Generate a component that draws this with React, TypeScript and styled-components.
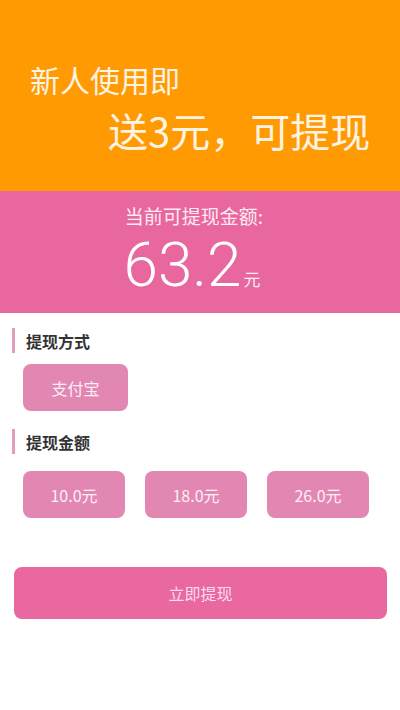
import styled, { createGlobalStyle } from "styled-components";

const GlobalStyle = createGlobalStyle`
  html, body {
    margin: 0;
    padding: 0;
    background: #fff;
  }
  body {
    font-family: "Noto Sans CJK SC", "Noto Sans", sans-serif;
  }
  * {
    box-sizing: border-box;
  }
`;

const Page = styled.div`
  width: 400px;
  min-height: 710px;
  background: #fff;
  display: flex;
  flex-direction: column;
`;

const Banner = styled.div`
  height: 191px;
  background: #ff9a02;
  color: #fdf3e3;
  padding: 61px 0 0 30px;
  display: flex;
  flex-direction: column;
`;

const BannerLine = styled.div<{ $size: number; $indent?: number; $gap?: number }>`
  font-size: ${(p) => p.$size}px;
  line-height: ${(p) => Math.round(p.$size * 1.2)}px;
  margin-left: ${(p) => p.$indent || 0}px;
  margin-top: ${(p) => p.$gap || 0}px;
  white-space: nowrap;
`;

const Balance = styled.div`
  height: 122px;
  background: #e8679e;
  color: #fdeaf2;
  display: flex;
  flex-direction: column;
  align-items: center;
  padding-top: 12px;
  padding-right: 12px;
`;

const BalanceLabel = styled.div`
  font-size: 19px;
  line-height: 25px;
`;

const AmountRow = styled.div`
  display: flex;
  align-items: baseline;
  margin-top: 6px;
  margin-right: 4px;
`;

const Amount = styled.span`
  font-family: "Roboto", "Liberation Sans", sans-serif;
  font-weight: 300;
  font-size: 62px;
  line-height: 62px;
  color: #fff;
`;

const Unit = styled.span`
  font-size: 17px;
  margin-left: 2px;
`;

const Section = styled.div`
  display: flex;
  flex-direction: column;
`;

const SectionTitle = styled.div<{ $gap: number }>`
  display: flex;
  align-items: center;
  gap: 11px;
  padding-left: 12px;
  margin-top: ${(p) => p.$gap}px;
  height: 25px;
  font-size: 16px;
  font-weight: 700;
  color: #333;

  &::before {
    content: "";
    width: 3px;
    height: 25px;
    background: #e29cbc;
  }
`;

const OptionRow = styled.div<{ $gap: number }>`
  display: flex;
  gap: 20px;
  padding-left: 23px;
  margin-top: ${(p) => p.$gap}px;
`;

const Option = styled.button<{ $wide?: boolean }>`
  width: ${(p) => (p.$wide ? 105 : 102)}px;
  height: 47px;
  border: none;
  border-radius: 8px;
  background: #e287b1;
  color: #fdeef5;
  font-family: "Noto Sans CJK SC", "Noto Sans", sans-serif;
  font-size: 16px;
  padding: 0;
  cursor: pointer;
`;

const Submit = styled.button`
  margin: 49px 13px 0 14px;
  height: 52px;
  border: none;
  border-radius: 8px;
  background: #e8689f;
  color: #fadcea;
  font-family: "Noto Sans CJK SC", "Noto Sans", sans-serif;
  font-size: 16px;
  cursor: pointer;
`;

const amounts = ["10.0元", "18.0元", "26.0元"];

const App = () => {
  return (
    <Page>
      <GlobalStyle />
      <Banner>
        <BannerLine $size={30}>新人使用即</BannerLine>
        <BannerLine $size={40} $indent={78} $gap={9}>
          送3元，可提现
        </BannerLine>
      </Banner>

      <Balance>
        <BalanceLabel>当前可提现金额:</BalanceLabel>
        <AmountRow>
          <Amount>63.2</Amount>
          <Unit>元</Unit>
        </AmountRow>
      </Balance>

      <Section>
        <SectionTitle $gap={15}>提现方式</SectionTitle>
        <OptionRow $gap={11}>
          <Option $wide>支付宝</Option>
        </OptionRow>
      </Section>

      <Section>
        <SectionTitle $gap={18}>提现金额</SectionTitle>
        <OptionRow $gap={17}>
          {amounts.map((a) => (
            <Option key={a}>{a}</Option>
          ))}
        </OptionRow>
      </Section>

      <Submit>立即提现</Submit>
    </Page>
  );
};

export default App;
